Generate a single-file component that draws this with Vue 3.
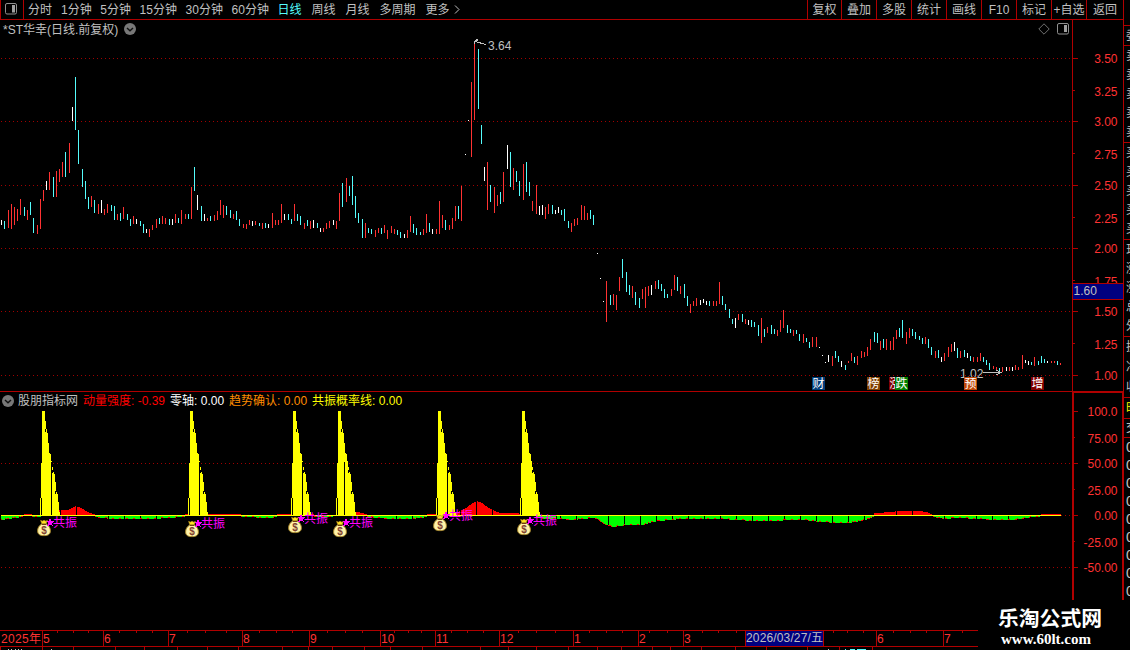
<template>
<div class="terminal">
    <div class="workspace">
        <div class="main">
            <nav class="toolbar">
                <div class="layout-toggle">
                    <svg width="12" height="12" viewBox="0 0 12 12">
                        <rect x="0.5" y="0.5" width="11" height="10.5" rx="1.5" class="icon-line" />
                        <rect x="7" y="2" width="3" height="7.5" class="icon-fill" />
                    </svg>
                </div>
                <div class="periods">
                    <span v-for="p in periods" :key="p" :class="['period', { active: p === '日线', minutes: p.includes('分钟') }]">{{ p }}</span>
                    <svg class="more" width="6" height="10" viewBox="0 0 6 10"><path d="M1 0.5L5 4.5L1 8.5" class="more-line" /></svg>
                </div>
                <div class="tools">
                    <span v-for="t in tools" :key="t" class="tool">{{ t }}</span>
                </div>
            </nav>

            <section class="price-panel">
                <header class="panel-header">
                    <span class="stock-name">*ST华幸(日线.前复权)</span>
                    <svg width="12" height="12" viewBox="0 0 12 12">
                        <circle cx="6" cy="6" r="6" class="round" />
                        <path d="M3 5L6 7.8L9 5" class="chevron" />
                    </svg>
                    <div class="panel-icons">
                        <svg width="12" height="12" viewBox="0 0 12 12"><path d="M6 0.8L11.2 6L6 11.2L0.8 6Z" class="icon-line thin" /></svg>
                        <svg width="12" height="12" viewBox="0 0 12 12">
                            <rect x="0.5" y="0.5" width="11" height="10.5" rx="1.5" class="icon-line" />
                            <rect x="7" y="2" width="3" height="7" class="icon-fill" />
                        </svg>
                    </div>
                </header>
                <svg class="chart" width="1123" height="354" viewBox="0 38 1123 354">
                    <line v-for="y in [58, 121, 185, 248, 311, 375]" :key="y" x1="1" x2="1072" :y1="y + 0.5" :y2="y + 0.5" class="grid" />
                    <rect v-for="b in bars" :key="b[0]" :x="b[0]" :y="b[1]" width="1" :height="b[2] - b[1]" :class="b[3]" />

                    <!-- máximo y mínimo -->
                    <path d="M474.5 44V40.5M474.5 40.5H478M475 41.5L486 44.5M476 39.5H478" class="arrow" />
                    <text x="488" y="50" class="label note">3.64</text>
                    <text x="960" y="378" class="label note">1.02</text>
                    <path d="M983 372.5H1001M996 370L1001 372.5L996 375" class="arrow" />

                    <g v-for="m in badges" :key="m.text">
                        <rect :x="m.x" y="377" width="13" height="13" :class="m.kind" />
                        <text :x="m.x + 0.5" y="388" class="badge-text">{{ m.text }}</text>
                    </g>

                    <rect x="1072" y="20" width="1" height="372" class="frame" />
                    <rect x="0" y="391" width="1123" height="1" class="frame" />
                    <g v-for="a in priceAxis" :key="a.label">
                        <rect x="1073" :y="a.y" :width="a.major ? 5 : 2" height="1" class="frame" />
                        <text x="1117.5" :y="a.y + (a.major ? 5 : 6)" class="label scale">{{ a.label }}</text>
                    </g>
                    <rect x="1073" y="283" width="50" height="17" class="frame" />
                    <rect x="1073" y="284" width="50" height="15" class="cursor-bg" />
                    <text x="1073.5" y="295" class="label note">1.60</text>
                </svg>
            </section>

            <section class="indicator-panel">
                <header class="panel-header indicator-header">
                    <svg width="12" height="12" viewBox="0 0 12 12">
                        <circle cx="6" cy="6" r="6" class="round" />
                        <path d="M3 5L6 7.8L9 5" class="chevron" />
                    </svg>
                    <span class="indicator-name">股朋指标网</span>
                    <span class="val red">动量强度: -0.39</span>
                    <span class="val white">零轴: 0.00</span>
                    <span class="val orange">趋势确认: 0.00</span>
                    <span class="val yellow">共振概率线: 0.00</span>
                </header>
                <svg class="chart" width="1123" height="191" viewBox="0 409 1123 191">
                    <line v-for="y in [463, 515, 567]" :key="y" x1="1" x2="1072" :y1="y + 0.5" :y2="y + 0.5" class="grid" />
                    <rect v-for="c in momentum" :key="c.key" :x="c.x" :y="c.y" width="1" :height="c.h" :class="c.kind" />
                    <g v-for="s in signals" :key="s.x">
                        <rect v-for="c in peakColumns" :key="c[0]" :x="s.x + c[0]" :y="c[1]" width="1" :height="515 - c[1]" class="peak" />
                        <rect v-for="h in peakHoles" :key="h[0]" :x="s.x + h[0]" :y="h[1]" width="1" :height="h[2]" class="hole" />
                        <rect v-if="s.gap" :x="s.x + s.gap" y="462" width="1" height="53" class="hole" />
                    </g>
                    <rect x="1" y="515" width="1060" height="1" class="peak" />
                    <g v-for="s in signals" :key="'b' + s.x">
                        <svg :x="s.bx" :y="s.by" width="14" height="17" viewBox="0 0 14 17">
                            <path d="M3.5 0.8L5.5 1.6L7 0.6L8.7 1.6L10.5 0.8L9.2 4.5H4.8Z" class="bag-neck" />
                            <path d="M4.8 4.5H9.2C12 6 13.5 8.7 13.4 11.5C13.3 14.8 11 16.2 7 16.2S0.7 14.8 0.6 11.5C0.5 8.7 2 6 4.8 4.5Z" class="bag" />
                            <path d="M5 4.7H9" class="bag-tie" />
                            <text x="7" y="14" class="dollar">$</text>
                        </svg>
                        <path :transform="`translate(${s.tx - 6} ${s.ty - 4})`" d="M3 0L4.2 3H7L5 5L6 8.5L3 6.5L0 8.5L1 5L-1 3H2Z" class="star" />
                        <text :x="s.tx" :y="s.ty + 5" class="signal-text">共振</text>
                    </g>

                    <rect x="1072" y="391" width="2" height="209" class="frame" />
                    <rect x="1122" y="391" width="1" height="209" class="frame" />
                    <rect x="1072" y="391" width="51" height="2" class="frame" />
                    <g v-for="a in indicatorAxis" :key="a.label">
                        <rect x="1074" :y="a.y" :width="a.major ? 4 : 1" height="1" class="frame" />
                        <text x="1117.5" :y="a.y + (a.major ? 5 : 6)" class="label scale">{{ a.label }}</text>
                    </g>
                </svg>
            </section>
        </div>

        <!-- panel de cotizaciones, casi oculto a la derecha -->
        <aside class="quotes">
            <div v-for="(g, i) in quoteGroups" :key="i" :class="['quote-group', g.kind]">
                <span v-for="(c, j) in g.rows" :key="j" class="quote-row">{{ c }}</span>
            </div>
        </aside>
    </div>

    <footer class="footer">
        <svg class="date-axis" width="978" height="50" viewBox="0 600 978 50">
            <rect x="0" y="630" width="978" height="1" class="frame" />
            <rect x="0" y="646" width="978" height="1" class="frame" />
            <rect v-for="x in minorTicks" :key="x" :x="x" y="631" width="1" height="2" class="frame" />
            <rect v-for="x in lowerTicks" :key="'l' + x" :x="x" y="647" width="1" height="3" class="frame" />
            <text x="1" y="643" class="label date" textLength="40">2025年</text>
            <g v-for="m in months" :key="m.label + m.x">
                <rect :x="m.x" y="631" width="1" height="15" class="frame" />
                <text :x="m.x + 1" y="643" class="label date">{{ m.label }}</text>
            </g>
            <rect x="745" y="631" width="79" height="15" class="cursor-bg" />
            <rect x="745" y="631" width="1" height="15" class="frame" />
            <rect x="823" y="631" width="1" height="15" class="frame" />
            <text x="746" y="642" class="label note" textLength="77">2026/03/27/五</text>
            <rect v-for="x in [8, 11, 15, 18, 21, 51, 828]" :key="'w' + x" :x="x" y="649" width="1" height="1" class="bit" />
            <path d="M845 649.5h1M850 649.5h5M857 649.5h9" class="cyan-bit" />
        </svg>
        <div class="brand">
            <strong class="brand-name">乐淘公式网</strong>
            <span class="brand-url">www.60lt.com</span>
        </div>
    </footer>
</div>
</template>

<script setup>
const periods = ['分时', '1分钟', '5分钟', '15分钟', '30分钟', '60分钟', '日线', '周线', '月线', '多周期', '更多']
const tools = ['复权', '叠加', '多股', '统计', '画线', 'F10', '标记', '+自选', '返回']

// x, arriba, abajo, color (r = sube, c = baja, w = igual)
const bars = [
    [1, 220, 225, 'w'], [4, 221, 229, 'c'], [8, 210, 228, 'r'], [11, 204, 229, 'r'], [14, 207, 225, 'r'],
    [17, 209, 221, 'r'], [20, 199, 215, 'r'], [24, 207, 216, 'c'], [27, 210, 220, 'r'], [30, 202, 215, 'c'],
    [33, 218, 233, 'c'], [37, 225, 234, 'r'], [40, 199, 229, 'r'], [43, 190, 201, 'r'], [46, 181, 190, 'w'],
    [49, 172, 190, 'r'], [53, 177, 197, 'c'], [56, 171, 197, 'r'], [59, 169, 182, 'r'], [62, 162, 177, 'r'],
    [65, 152, 177, 'c'], [69, 143, 173, 'r'], [72, 107, 121, 'w'], [75, 77, 130, 'c'], [78, 130, 164, 'c'],
    [82, 169, 187, 'c'], [85, 181, 199, 'c'], [88, 197, 209, 'c'], [91, 196, 207, 'r'], [94, 200, 213, 'c'],
    [98, 204, 214, 'r'], [101, 200, 213, 'w'], [104, 209, 215, 'r'], [107, 204, 213, 'r'], [111, 205, 211, 'c'],
    [114, 206, 220, 'c'], [117, 214, 220, 'r'], [120, 213, 221, 'c'], [123, 207, 219, 'r'], [127, 214, 220, 'c'],
    [130, 219, 226, 'c'], [133, 216, 224, 'r'], [136, 219, 224, 'w'], [140, 221, 226, 'c'], [143, 224, 233, 'c'],
    [146, 229, 233, 'w'], [149, 229, 237, 'r'], [152, 225, 230, 'r'], [156, 219, 228, 'r'], [159, 218, 224, 'c'],
    [162, 216, 224, 'r'], [165, 218, 224, 'r'], [169, 219, 225, 'c'], [172, 219, 225, 'w'], [175, 214, 223, 'r'],
    [178, 218, 223, 'c'], [181, 210, 224, 'r'], [185, 214, 219, 'r'], [188, 214, 219, 'c'], [191, 187, 219, 'r'],
    [194, 167, 191, 'c'], [197, 195, 210, 'w'], [201, 206, 221, 'c'], [204, 214, 221, 'w'], [207, 218, 221, 'r'],
    [210, 216, 221, 'c'], [214, 215, 221, 'r'], [217, 211, 220, 'r'], [220, 200, 215, 'r'], [223, 205, 218, 'r'],
    [226, 206, 215, 'c'], [230, 210, 218, 'c'], [233, 214, 219, 'r'], [236, 211, 220, 'c'], [239, 219, 226, 'c'],
    [243, 224, 228, 'r'], [246, 224, 229, 'r'], [249, 220, 225, 'r'], [252, 221, 226, 'w'], [255, 221, 225, 'r'],
    [259, 223, 226, 'c'], [262, 223, 229, 'r'], [265, 223, 228, 'c'], [268, 224, 228, 'w'], [272, 213, 228, 'r'],
    [275, 220, 225, 'r'], [278, 220, 225, 'r'], [281, 204, 223, 'r'], [284, 214, 220, 'w'], [288, 214, 220, 'c'],
    [291, 219, 224, 'c'], [294, 204, 221, 'r'], [297, 214, 221, 'c'], [300, 216, 225, 'c'], [304, 223, 229, 'r'],
    [307, 220, 226, 'c'], [310, 221, 229, 'r'], [313, 220, 228, 'w'], [317, 223, 228, 'c'], [320, 228, 232, 'w'],
    [323, 228, 232, 'r'], [326, 223, 229, 'r'], [329, 221, 228, 'r'], [333, 220, 225, 'w'], [336, 221, 229, 'r'],
    [339, 193, 221, 'r'], [342, 183, 207, 'c'], [346, 178, 202, 'r'], [349, 186, 196, 'c'], [352, 176, 205, 'c'],
    [355, 196, 218, 'c'], [358, 213, 223, 'c'], [362, 219, 238, 'c'], [365, 223, 238, 'r'], [368, 228, 233, 'c'],
    [371, 229, 234, 'c'], [375, 230, 237, 'r'], [378, 228, 233, 'r'], [381, 228, 234, 'c'], [384, 225, 233, 'r'],
    [387, 230, 239, 'r'], [391, 226, 233, 'r'], [394, 229, 234, 'r'], [397, 230, 235, 'c'], [400, 232, 238, 'c'],
    [404, 234, 238, 'w'], [407, 230, 238, 'r'], [410, 216, 232, 'r'], [413, 224, 233, 'c'], [416, 228, 235, 'c'],
    [420, 232, 235, 'c'], [423, 229, 235, 'r'], [426, 214, 233, 'r'], [429, 223, 232, 'c'], [432, 229, 234, 'w'],
    [436, 229, 234, 'r'], [439, 201, 234, 'r'], [442, 215, 228, 'r'], [445, 220, 230, 'c'], [449, 225, 230, 'r'],
    [452, 218, 229, 'r'], [455, 206, 221, 'r'], [458, 206, 219, 'c'], [461, 186, 221, 'r'], [465, 154, 155, 'w'],
    [468, 120, 121, 'w'], [471, 82, 157, 'r'], [474, 43, 120, 'r'], [478, 49, 109, 'c'], [481, 125, 144, 'c'],
    [484, 167, 181, 'w'], [487, 162, 210, 'r'], [490, 185, 202, 'c'], [494, 187, 213, 'r'], [497, 195, 206, 'r'],
    [500, 192, 204, 'c'], [503, 172, 202, 'r'], [507, 145, 169, 'w'], [510, 152, 187, 'c'], [513, 168, 190, 'r'],
    [516, 171, 182, 'c'], [519, 181, 196, 'c'], [523, 164, 200, 'r'], [526, 162, 192, 'c'], [529, 182, 196, 'c'],
    [532, 201, 211, 'r'], [536, 185, 214, 'r'], [539, 206, 215, 'w'], [542, 205, 215, 'w'], [545, 207, 219, 'r'],
    [548, 204, 214, 'r'], [552, 205, 214, 'c'], [555, 210, 214, 'w'], [558, 207, 213, 'w'], [561, 210, 215, 'c'],
    [564, 209, 221, 'c'], [568, 221, 228, 'c'], [571, 223, 232, 'r'], [574, 219, 226, 'r'], [577, 218, 225, 'r'],
    [581, 205, 220, 'r'], [584, 206, 220, 'r'], [587, 213, 220, 'r'], [590, 210, 219, 'c'], [593, 215, 225, 'c'],
    [597, 253, 254, 'w'], [600, 278, 279, 'w'], [603, 301, 302, 'w'], [606, 281, 322, 'r'], [610, 295, 305, 'c'],
    [613, 294, 305, 'r'], [616, 295, 310, 'r'], [619, 277, 291, 'r'], [622, 259, 278, 'c'], [626, 272, 292, 'c'],
    [629, 285, 295, 'c'], [632, 286, 298, 'r'], [635, 292, 305, 'c'], [639, 298, 308, 'c'], [642, 289, 299, 'r'],
    [645, 287, 308, 'r'], [648, 286, 296, 'r'], [651, 285, 295, 'w'], [655, 281, 289, 'r'], [658, 280, 289, 'c'],
    [661, 284, 291, 'c'], [664, 289, 298, 'c'], [667, 294, 298, 'c'], [671, 289, 296, 'r'], [674, 275, 290, 'r'],
    [677, 277, 291, 'c'], [680, 286, 294, 'r'], [684, 284, 298, 'c'], [687, 296, 306, 'c'], [690, 304, 313, 'r'],
    [693, 301, 306, 'r'], [696, 298, 306, 'r'], [700, 300, 305, 'w'], [703, 299, 303, 'w'], [706, 301, 305, 'w'],
    [709, 301, 306, 'c'], [713, 301, 306, 'r'], [716, 301, 306, 'r'], [719, 282, 304, 'r'], [722, 296, 305, 'c'],
    [725, 304, 310, 'c'], [729, 309, 318, 'c'], [732, 319, 324, 'c'], [735, 318, 328, 'w'], [738, 314, 320, 'r'],
    [742, 314, 322, 'c'], [745, 319, 324, 'r'], [748, 320, 325, 'w'], [751, 320, 327, 'c'], [754, 322, 327, 'c'],
    [758, 325, 336, 'c'], [761, 318, 343, 'r'], [764, 329, 337, 'c'], [767, 327, 333, 'r'], [771, 325, 334, 'c'],
    [774, 329, 334, 'c'], [777, 330, 336, 'r'], [780, 320, 332, 'r'], [783, 310, 328, 'r'], [787, 325, 333, 'c'],
    [790, 329, 333, 'c'], [793, 330, 336, 'r'], [796, 330, 334, 'c'], [799, 334, 341, 'c'], [803, 334, 343, 'r'],
    [806, 338, 342, 'c'], [809, 342, 348, 'c'], [812, 337, 347, 'r'], [816, 337, 347, 'r'], [819, 347, 348, 'w'],
    [822, 355, 356, 'w'], [825, 362, 363, 'w'], [828, 355, 362, 'w'], [832, 356, 366, 'r'], [835, 351, 358, 'c'],
    [838, 356, 362, 'c'], [841, 361, 367, 'w'], [845, 365, 370, 'c'], [848, 361, 363, 'r'], [851, 353, 361, 'r'],
    [854, 357, 363, 'c'], [857, 356, 365, 'r'], [861, 351, 358, 'r'], [864, 352, 357, 'r'], [867, 347, 356, 'r'],
    [870, 339, 350, 'r'], [874, 332, 342, 'c'], [877, 333, 343, 'c'], [880, 341, 350, 'r'], [883, 339, 348, 'c'],
    [886, 339, 350, 'r'], [890, 341, 350, 'r'], [893, 337, 350, 'r'], [896, 330, 339, 'r'], [899, 328, 337, 'c'],
    [902, 320, 338, 'c'], [906, 332, 344, 'r'], [909, 328, 338, 'r'], [912, 329, 336, 'c'], [915, 332, 339, 'c'],
    [919, 336, 340, 'c'], [922, 338, 344, 'c'], [925, 337, 344, 'r'], [928, 339, 348, 'c'], [931, 347, 355, 'c'],
    [935, 351, 358, 'r'], [938, 350, 358, 'c'], [941, 357, 362, 'w'], [944, 353, 361, 'r'], [948, 347, 357, 'r'],
    [951, 344, 352, 'r'], [954, 342, 351, 'w'], [957, 348, 358, 'c'], [960, 351, 358, 'r'], [964, 350, 357, 'c'],
    [967, 353, 358, 'w'], [970, 356, 361, 'c'], [973, 357, 362, 'r'], [977, 357, 362, 'r'], [980, 353, 361, 'r'],
    [983, 357, 362, 'c'], [986, 360, 365, 'c'], [989, 363, 370, 'c'], [993, 366, 369, 'r'], [996, 367, 371, 'r'],
    [999, 368, 372, 'c'], [1002, 367, 372, 'r'], [1006, 367, 371, 'w'], [1009, 367, 371, 'r'], [1012, 367, 371, 'w'],
    [1015, 365, 370, 'r'], [1018, 367, 370, 'r'], [1022, 355, 369, 'r'], [1025, 360, 363, 'w'], [1028, 361, 365, 'w'],
    [1031, 362, 365, 'c'], [1034, 357, 366, 'r'], [1038, 361, 365, 'c'], [1041, 356, 363, 'c'], [1044, 359, 363, 'c'],
    [1047, 361, 363, 'w'], [1051, 361, 363, 'r'], [1054, 361, 363, 'r'], [1057, 361, 365, 'c'], [1060, 363, 365, 'r']
]

const badges = [
    { x: 812, text: '财', kind: 'navy' },
    { x: 867, text: '榜', kind: 'brown' },
    { x: 889, text: '涨', kind: 'maroon' },
    { x: 895, text: '跌', kind: 'green' },
    { x: 964, text: '预', kind: 'rust' },
    { x: 1031, text: '增', kind: 'maroon' }
]

const toAxis = (labels, ys) => labels.map((label, i) => ({ label, y: ys[i], major: i % 2 === 0 }))
const priceAxis = toAxis(
    ['3.50', '3.25', '3.00', '2.75', '2.50', '2.25', '2.00', '1.75', '1.50', '1.25', '1.00'],
    [58, 90, 121, 153, 185, 217, 248, 280, 311, 343, 375]
)
const indicatorAxis = toAxis(
    ['100.0', '75.00', '50.00', '25.00', '0.00', '-25.00', '-50.00'],
    [411, 437, 463, 489, 515, 541, 567]
)

// Momentum: desplazamiento respecto al eje cero (negativo = rojo, hacia arriba)
const curve = [
    [1, 4], [8, 3], [14, 2], [22, 1], [24, -1], [31, -1], [32, 1], [40, 1], [41, 0], [55, -4], [60, -5], [67, -5], [71, -7],
    [75, -9], [79, -8], [84, -5], [89, -2], [94, -1], [95, 1], [101, 2], [112, 3], [155, 3], [166, 2], [184, 1], [185, -1],
    [240, -1], [241, 1], [270, 2], [276, 1], [277, -1], [313, -1], [314, 1], [328, 1], [336, 0], [350, -3], [357, -3], [366, -1],
    [367, 1], [378, 2], [389, 3], [410, 3], [420, 2], [426, 1], [427, -1], [450, -2], [457, -3], [462, -5], [467, -8],
    [472, -12], [476, -14], [480, -13], [487, -8], [494, -4], [500, -2], [516, -2], [522, -1], [535, -1], [536, 1], [543, 3],
    [560, 3], [572, 4], [582, 3], [592, 2], [597, 3], [603, 8], [612, 11], [620, 10], [626, 9], [643, 9], [652, 6],
    [668, 4], [683, 3], [700, 3], [722, 3], [735, 4], [755, 5], [778, 5], [786, 4], [804, 4], [820, 6], [838, 7], [848, 7],
    [860, 5], [868, 3], [873, 1], [874, -2], [892, -3], [897, -4], [920, -4], [926, -3], [931, -1], [933, 1], [945, 3],
    [956, 2], [980, 3], [992, 4], [1012, 4], [1020, 3], [1032, 1], [1039, 1], [1041, -1], [1061, -1]
]
const momentum = []
for (let i = 0, prev = 0; i < curve.length - 1; i++) {
    const [x1, v1] = curve[i]
    const [x2, v2] = curve[i + 1]
    for (let x = x1; x < x2; x++) {
        const v = Math.round(v1 + (v2 - v1) * (x - x1) / (x2 - x1))
        const gap = x % 16 === (x < 560 ? 12 : 0) && Math.abs(v) > 2
        if (v < 0 && !gap) momentum.push({ key: x, x, y: 515 + v, h: -v, kind: 'up' })
        if (v > 0 && !gap) momentum.push({ key: x, x, y: 516, h: v, kind: 'down' })
        if (v > 0 && (v !== prev || x % 7 < 2)) momentum.push({ key: 'e' + x, x, y: 515 + v, h: 1, kind: 'up' })
        prev = v
    }
}

const peakColumns = [
    [-2, 498], [-1, 463], [0, 411], [1, 411], [2, 411], [3, 421], [4, 429], [5, 433], [6, 443], [7, 450], [8, 454],
    [9, 461], [10, 467], [11, 472], [12, 474], [13, 482], [14, 492], [15, 494], [16, 502], [17, 512]
]
const peakHoles = [[-1, 498, 17], [3, 429, 3], [7, 450, 3], [10, 470, 3], [13, 491, 3]]
const signals = [
    { x: 42, gap: 9, bx: 37, by: 519.5, tx: 53, ty: 522 },
    { x: 190, gap: 9, bx: 185, by: 520.5, tx: 201, ty: 523 },
    { x: 293, gap: 9, bx: 288, by: 516.5, tx: 304, ty: 518 },
    { x: 338, gap: 6, bx: 333, by: 520.5, tx: 349, ty: 522 },
    { x: 438, gap: 9, bx: 433, by: 514.5, tx: 449, ty: 515 },
    { x: 522, gap: 0, bx: 517, by: 518.5, tx: 533, ty: 520 }
]

const months = [
    { x: 42, label: '5' }, { x: 103, label: '6' }, { x: 168, label: '7' }, { x: 242, label: '8' },
    { x: 309, label: '9' }, { x: 380, label: '10' }, { x: 435, label: '11' }, { x: 499, label: '12' },
    { x: 573, label: '1' }, { x: 638, label: '2' }, { x: 683, label: '3' }, { x: 876, label: '6' }, { x: 943, label: '7' }
]
const minorTicks = [
    57, 73, 88, 119, 136, 152, 187, 205, 226, 259, 276, 292, 327, 345, 362, 394, 408, 421, 451, 467, 483,
    518, 536, 555, 589, 606, 622, 649, 667, 702, 718, 736, 833, 847, 863, 893, 910, 926, 962
]
const lowerTicks = [
    0, 42, 73, 115, 144, 177, 207, 238, 282, 308, 332, 364, 390, 422, 480, 508, 536, 568, 597, 621, 652,
    670, 701, 735, 766, 807, 839, 872
]

const quoteGroups = [
    { kind: 'head', rows: ['委'] },
    { kind: 'five', rows: ['卖', '卖', '卖', '卖', '卖'] },
    { kind: 'five', rows: ['买', '买', '买', '买', '买'] },
    { kind: 'five', rows: ['现', '涨', '涨', '总', '外'] },
    { kind: 'three', rows: ['换', '净', '收'] },
    { kind: 'tab', rows: ['时'] },
    { kind: 'sub', rows: ['交'] },
    { kind: 'times', rows: ['0', '0', '0', '0', '0', '0', '0', '0', '0'] }
]
</script>

<style>
body {
    margin: 0;
    background: #000;
}
</style>

<style scoped>
.terminal {
    width: 1130px;
    height: 650px;
    display: flex;
    flex-direction: column;
    overflow: hidden;
    background: #000;
    color: #c0c0c0;
    font-family: "Liberation Sans", "Noto Sans CJK SC", sans-serif;
    font-size: 12px;
    line-height: 16px;
    white-space: nowrap;
}

.workspace {
    display: flex;
    height: 600px;
}

.main {
    width: 1123px;
    flex: none;
    display: flex;
    flex-direction: column;
}

svg {
    display: block;
    flex: none;
}

/* --- BARRA SUPERIOR --- */
.toolbar {
    display: flex;
    height: 19px;
    border-bottom: 1px solid #b00000;
}

.layout-toggle {
    box-sizing: border-box;
    width: 24px;
    padding: 3px 0 0 4px;
    border-left: 1px solid #b00000;
    border-right: 1px solid #b00000;
}

.periods {
    display: flex;
    flex: 1;
    gap: 10px;
    padding: 2px 0 0 4px;
}

.period.minutes {
    margin-right: -1.4px;
}

.period:first-child {
    margin-right: -1px;
}

.period.active {
    color: #54fcfc;
}

.more {
    margin: 3px 0 0 -6px;
}

.more-line {
    fill: none;
    stroke: #c0c0c0;
}

.tools {
    display: flex;
}

.tool {
    box-sizing: border-box;
    width: 35px;
    padding-top: 2px;
    border-left: 1px solid #b00000;
    text-align: center;
}

.tool:first-child {
    width: 34px;
}

.tool:last-child {
    width: 37px;
}

/* --- PANELES --- */
.panel-header {
    display: flex;
    align-items: center;
    height: 18px;
    padding-left: 3px;
}

.stock-name {
    margin-right: 6px;
    padding-top: 1px;
}

.panel-icons {
    display: flex;
    gap: 7px;
    margin-left: auto;
    padding-right: 54px;
}

.indicator-header {
    height: 17px;
    padding-left: 2px;
}

.indicator-name {
    margin: 0 5px 0 4px;
}

.val {
    margin-right: 5px;
}

.red { color: #ff0000; }
.white { color: #fff; }
.orange { color: #ff8c00; }
.yellow { color: #ffff00; }

.icon-line {
    fill: none;
    stroke: #909090;
}

.thin { stroke: #707070; }
.icon-fill { fill: #a0a0a0; }
.round { fill: #787878; }

.chevron {
    fill: none;
    stroke: #101010;
    stroke-width: 1.4;
}

/* --- GRÁFICOS --- */
.chart {
    overflow: visible;
    shape-rendering: crispEdges;
}

.grid {
    stroke: #a00000;
    stroke-dasharray: 1 3;
}

.frame { fill: #b00000; }
.r { fill: #ff3232; }
.c { fill: #54fcfc; }
.w { fill: #fff; }
.up { fill: #ff0000; }
.down { fill: #00ff00; }
.peak { fill: #ffff00; }
.hole { fill: #000; }
.navy { fill: #003c78; }
.brown { fill: #804000; }
.maroon { fill: #800000; }
.green { fill: #008000; }
.rust { fill: #c04808; }
.cursor-bg { fill: #000080; }
.bit { fill: #c0c0c0; }
.cyan-bit { stroke: #54fcfc; }

.arrow {
    fill: none;
    stroke: #c0c0c0;
}

.label {
    font-size: 12px;
}

.note { fill: #c0c0c0; }
.date { fill: #ff3232; }

.scale {
    fill: #ff3232;
    text-anchor: end;
}

.badge-text {
    fill: #fff;
    font-size: 12px;
}

.signal-text {
    fill: #ff00ff;
    font-size: 12px;
}

.star { fill: #ff00ff; }

.bag {
    fill: #fff3a8;
    stroke: #a08028;
    shape-rendering: auto;
}

.bag-neck {
    fill: #ffe020;
    stroke: #a07818;
    stroke-width: 0.6;
    shape-rendering: auto;
}

.bag-tie { stroke: #704010; }

.dollar {
    fill: #804030;
    font-size: 10px;
    font-weight: bold;
    text-anchor: middle;
}

/* --- COTIZACIONES --- */
.quotes {
    box-sizing: border-box;
    width: 7px;
    overflow: hidden;
    padding-top: 25px;
    border-left: 1px solid #b00000;
}

.quote-group {
    box-sizing: border-box;
    display: flex;
    flex-direction: column;
    justify-content: space-around;
    padding-left: 2px;
    border-top: 1px solid #b00000;
}

.head { height: 20px; }
.five { height: 97px; }
.three { height: 61px; }

.tab {
    height: 21px;
    color: #ffff00;
}

.sub { height: 19px; }

.times {
    height: 163px;
    font-size: 14px;
}

/* --- PIE --- */
.footer {
    display: flex;
    height: 50px;
}

.date-axis {
    shape-rendering: crispEdges;
}

.brand {
    display: flex;
    flex: 1;
    flex-direction: column;
    padding: 6px 0 0 20px;
    color: #fff;
}

.brand-name {
    font-size: 20.8px;
    line-height: 26px;
}

.brand-url {
    padding-left: 3px;
    font-family: "Liberation Serif", serif;
    font-size: 15px;
    font-weight: bold;
    line-height: 15px;
}
</style>
